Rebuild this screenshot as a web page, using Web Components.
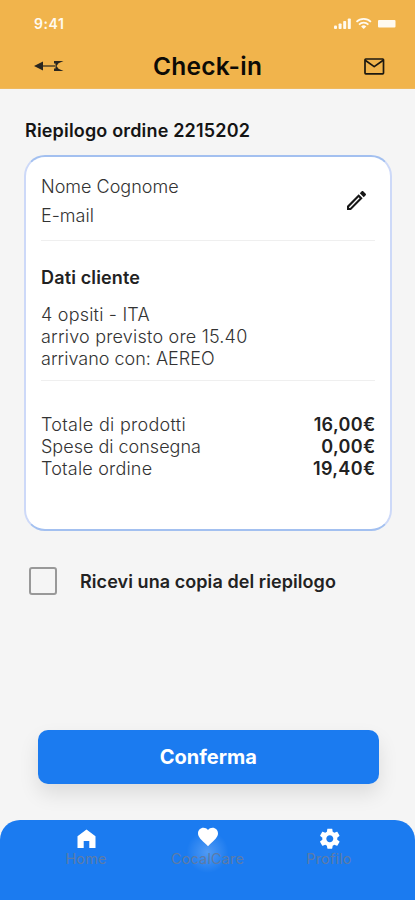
<!DOCTYPE html>
<html lang="it">
<head>
<meta charset="utf-8">
<title>Check-in</title>
<style>
    body {
        margin: 0;
        background: #f5f5f5;
        font-family: Inter, "Liberation Sans", sans-serif;
        color: #1c1c1c;
    }
    .wide {
        letter-spacing: .2px;
    }
    .wider {
        letter-spacing: .3px;
    }
</style>
</head>
<body>
<checkin-screen>
    <app-header slot="header" time="9:41">Check-in</app-header>
    <order-card order="2215202">
        <span slot="name">Nome Cognome</span>
        <span slot="email">E-mail</span>
        <span slot="guests" class="wide">4 opsiti - ITA</span>
        <span slot="arrival" class="wide">arrivo previsto ore 15.40</span>
        <span slot="transport">arrivano con: AEREO</span>
        <price-row slot="prices" class="wider" amount="16,00€">Totale di prodotti</price-row>
        <price-row slot="prices" amount="0,00€">Spese di consegna</price-row>
        <price-row slot="prices" class="wide" amount="19,40€">Totale ordine</price-row>
    </order-card>
    <check-option>Ricevi una copia del riepilogo</check-option>
    <confirm-button>Conferma</confirm-button>
    <tab-bar slot="footer">
        <tab-item icon="home">Home</tab-item>
        <tab-item icon="heart" active>CocalCare</tab-item>
        <tab-item icon="gear">Profilo</tab-item>
    </tab-bar>
</checkin-screen>

<script>
const icons = {
    home: '<path d="M12.5 3.5 3.5 10.2V22h6.200v-7h5.600v7h6.200V10.200z"/>',
    heart: '<path transform="translate(0 -1.2)" d="M12 21.35l-1.45-1.32C5.4 15.36 2 12.28 2 8.5 2 5.42 4.42 3 7.5 3c1.74 0 3.41.81 4.5 2.09C13.09 3.81 14.76 3 16.5 3 19.58 3 22 5.42 22 8.5c0 3.78-3.4 6.86-8.55 11.54z"/>',
    gear: '<path transform="translate(.8 .7)" d="M19.43 12.98c.04-.32.07-.64.07-.98s-.03-.66-.07-.98l2.11-1.65c.19-.15.24-.42.12-.64l-2-3.46c-.12-.22-.39-.3-.61-.22l-2.49 1c-.52-.4-1.08-.73-1.69-.98l-.38-2.65C14.46 2.18 14.25 2 14 2h-4c-.25 0-.46.18-.49.42l-.38 2.65c-.61.25-1.17.59-1.69.98l-2.49-1c-.23-.09-.49 0-.61.22l-2 3.46c-.13.22-.07.49.12.64l2.11 1.65c-.04.32-.07.65-.07.98s.03.66.07.98l-2.11 1.65c-.19.15-.24.42-.12.64l2 3.46c.12.22.39.3.61.22l2.49-1c.52.4 1.08.73 1.69.98l.38 2.65c.03.24.24.42.49.42h4c.25 0 .46-.18.49-.42l.38-2.65c.61-.25 1.17-.59 1.69-.98l2.49 1c.23.09.49 0 .61-.22l2-3.46c.12-.22.07-.49-.12-.64zM12 15.5c-1.93 0-3.5-1.57-3.5-3.5s1.57-3.5 3.5-3.5 3.5 1.57 3.5 3.5-1.57 3.5-3.5 3.5z"/>'
};

class BaseElement extends HTMLElement {
    constructor(){
        super();
        this.attachShadow({mode: 'open'});
        this.shadowRoot.innerHTML = this.render();
    }
}

class CheckinScreen extends BaseElement {
    render(){
        return `
            <style>
                :host {
                    display: flex;
                    flex-direction: column;
                    height: 900px;
                    overflow: hidden;
                }
                main {
                    flex: 1;
                    display: flex;
                    flex-direction: column;
                    padding: 31px 23px 0 24px;
                }
            </style>
            <slot name="header"></slot>
            <main><slot></slot></main>
            <slot name="footer"></slot>
        `;
    }
}
customElements.define('checkin-screen', CheckinScreen);

class AppHeader extends BaseElement {
    render(){
        return `
            <style>
                :host {
                    display: block;
                    box-sizing: border-box;
                    height: 89px;
                    background: #f1b44c;
                    border-bottom: 1px solid #efb95f;
                    color: #0c0a06;
                }
                .status {
                    display: flex;
                    align-items: center;
                    justify-content: space-between;
                    height: 47px;
                    padding: 0 19px 0 34px;
                    box-sizing: border-box;
                    color: #fffaf0;
                }
                .time {
                    font-size: 14px;
                    font-weight: 600;
                    letter-spacing: .6px;
                }
                .title {
                    display: grid;
                    grid-template-columns: 90px 1fr 90px;
                    align-items: center;
                    height: 38px;
                }
                h1 {
                    margin: 0;
                    font-size: 24.5px;
                    font-weight: 600;
                    line-height: 38px;
                    letter-spacing: .25px;
                    text-align: center;
                }
                svg {
                    display: block;
                }
                .back {
                    margin-left: 34px;
                }
                .mail {
                    margin-left: 39px;
                }
            </style>
            <div class="status">
                <span class="time">${this.getAttribute('time')}</span>
                <svg width="62" height="12" viewBox="0 0 62 12" fill="currentColor">
                    <rect x="0" y="7.5" width="3" height="3.5" rx="1"/>
                    <rect x="4.6" y="5.5" width="3" height="5.5" rx=".8"/>
                    <rect x="9.2" y="3" width="3" height="8" rx=".8"/>
                    <rect x="13.8" y=".5" width="3" height="10.5" rx=".8"/>
                    <path d="M22.5 3.9a10.2 10.2 0 0 1 14.4 0" fill="none" stroke="currentColor" stroke-width="1.7"/>
                    <path d="M25 6.6a6.700 6.700 0 0 1 9.400 0" fill="none" stroke="currentColor" stroke-width="1.7"/>
                    <path d="M29.7 11l-2.600-2.600a3.800 3.800 0 0 1 5.200 0z"/>
                    <rect x="44" y="2" width="17.5" height="7.5" rx="1"/>
                </svg>
            </div>
            <div class="title">
                <svg class="back" width="30" height="12" viewBox="0 0 30 12" fill="#29261f">
                    <path d="M0 6 9 1.5v9z"/>
                    <path d="M9 5.4h12v1.2H9z"/>
                    <path d="M20 1h9.500L24.500 3.200 22.500 6l2 2.800 5 2.200H20V8.500h1.500v-5H20z"/>
                </svg>
                <h1><slot></slot></h1>
                <svg class="mail" width="21" height="17" viewBox="0 0 21 17" fill="none" stroke="#1c1810" stroke-width="1.7" stroke-linejoin="round">
                    <rect x="1" y="1" width="18.5" height="14.8" rx=".8"/>
                    <path d="m1.200 2.200 9 6.400 9-6.400"/>
                </svg>
            </div>
        `;
    }
}
customElements.define('app-header', AppHeader);

class OrderCard extends BaseElement {
    render(){
        return `
            <style>
                :host {
                    display: block;
                }
                h2, h3 {
                    margin: 0;
                    font-weight: 600;
                }
                h2 {
                    font-size: 18px;
                    line-height: 22px;
                    letter-spacing: .17px;
                    color: #141414;
                    padding-left: 1px;
                }
                .card {
                    box-sizing: border-box;
                    height: 376px;
                    margin-top: 13px;
                    padding: 0 15px;
                    border: 2px solid;
                    border-color: #a3c0f0 #cdd9f8 #a3c0f0 #cdd9f8;
                    border-radius: 21px;
                    background: #fff;
                    font-size: 18px;
                    line-height: 22px;
                    font-weight: 300;
                    color: #333;
                }
                .contact {
                    display: flex;
                    justify-content: space-between;
                    align-items: center;
                    height: 83px;
                    padding-right: 9px;
                    border-bottom: 1px solid #efefef;
                    line-height: 29px;
                }
                .lines {
                    display: flex;
                    flex-direction: column;
                }
                .contact .lines {
                    padding-top: 5px;
                }
                .contact svg {
                    margin-top: 4px;
                }
                .client {
                    height: 139px;
                    border-bottom: 1px solid #efefef;
                }
                h3 {
                    padding: 26px 0 15px;
                    font-size: 18px;
                    letter-spacing: .15px;
                    color: #222;
                }
                .prices {
                    padding-top: 33px;
                }
            </style>
            <h2>Riepilogo ordine ${this.getAttribute('order')}</h2>
            <div class="card">
                <div class="contact">
                    <div class="lines">
                        <slot name="name"></slot>
                        <slot name="email"></slot>
                    </div>
                    <svg width="19" height="19" viewBox="3 3 18 18" fill="#161616">
                        <path d="M14.06 9.02l.92.92L5.92 19H5v-.92l9.060-9.060M17.660 3c-.25 0-.51.1-.7.290l-1.830 1.830 3.750 3.750 1.830-1.830c.390-.390.390-1.020 0-1.410l-2.340-2.340c-.2-.2-.450-.290-.710-.290zm-3.600 3.190L3 17.250V21h3.750L17.810 9.940l-3.750-3.750z"/>
                    </svg>
                </div>
                <div class="client">
                    <h3>Dati cliente</h3>
                    <div class="lines">
                        <slot name="guests"></slot>
                        <slot name="arrival"></slot>
                        <slot name="transport"></slot>
                    </div>
                </div>
                <div class="prices"><slot name="prices"></slot></div>
            </div>
        `;
    }
}
customElements.define('order-card', OrderCard);

class PriceRow extends BaseElement {
    render(){
        return `
            <style>
                :host {
                    display: flex;
                    justify-content: space-between;
                }
                b {
                    font-weight: 600;
                    letter-spacing: .35px;
                    margin-right: -.5px;
                    color: #222;
                }
            </style>
            <slot></slot>
            <b>${this.getAttribute('amount')}</b>
        `;
    }
}
customElements.define('price-row', PriceRow);

class CheckOption extends BaseElement {
    render(){
        return `
            <style>
                :host {
                    display: flex;
                    align-items: center;
                    gap: 23px;
                    margin-top: 36px;
                    padding-left: 5px;
                    font-size: 18px;
                    font-weight: 600;
                    letter-spacing: .07px;
                    color: #222;
                }
                .box {
                    box-sizing: border-box;
                    width: 28px;
                    height: 28px;
                    border: 2px solid #999;
                    border-radius: 3px;
                }
            </style>
            <span class="box"></span>
            <slot></slot>
        `;
    }
}
customElements.define('check-option', CheckOption);

class ConfirmButton extends BaseElement {
    render(){
        return `
            <style>
                :host {
                    display: block;
                    margin: 135px 13px 0 13.5px;
                }
                button {
                    width: 100%;
                    height: 54px;
                    padding: 0;
                    border: 0;
                    border-radius: 10px;
                    background: #1b7bf0;
                    box-shadow: 0 10px 20px rgba(0, 0, 0, .1);
                    font: 650 20px Inter, sans-serif;
                    color: #fff;
                }
            </style>
            <button><slot></slot></button>
        `;
    }
}
customElements.define('confirm-button', ConfirmButton);

class TabBar extends BaseElement {
    render(){
        return `
            <style>
                :host {
                    display: grid;
                    grid-template-columns: repeat(3, 121.5px);
                    justify-content: center;
                    box-sizing: border-box;
                    height: 80px;
                    padding-top: 6px;
                    border-radius: 20px 20px 0 0;
                    background: #1b7bf0;
                }
            </style>
            <slot></slot>
        `;
    }
}
customElements.define('tab-bar', TabBar);

class TabItem extends BaseElement {
    render(){
        return `
            <style>
                :host {
                    display: flex;
                    flex-direction: column;
                    align-items: center;
                    font-size: 14.5px;
                    line-height: 17px;
                    letter-spacing: .15px;
                    color: #5c7ba8;
                }
                :host([active]) {
                    background: radial-gradient(circle at 50% 26px, rgba(255, 255, 255, .24), rgba(255, 255, 255, 0) 21px);
                }
                svg {
                    display: block;
                    fill: #fff;
                }
            </style>
            <svg width="24" height="24" viewBox="0 0 24 24">${icons[this.getAttribute('icon')]}</svg>
            <slot></slot>
        `;
    }
}
customElements.define('tab-item', TabItem);
</script>
</body>
</html>
